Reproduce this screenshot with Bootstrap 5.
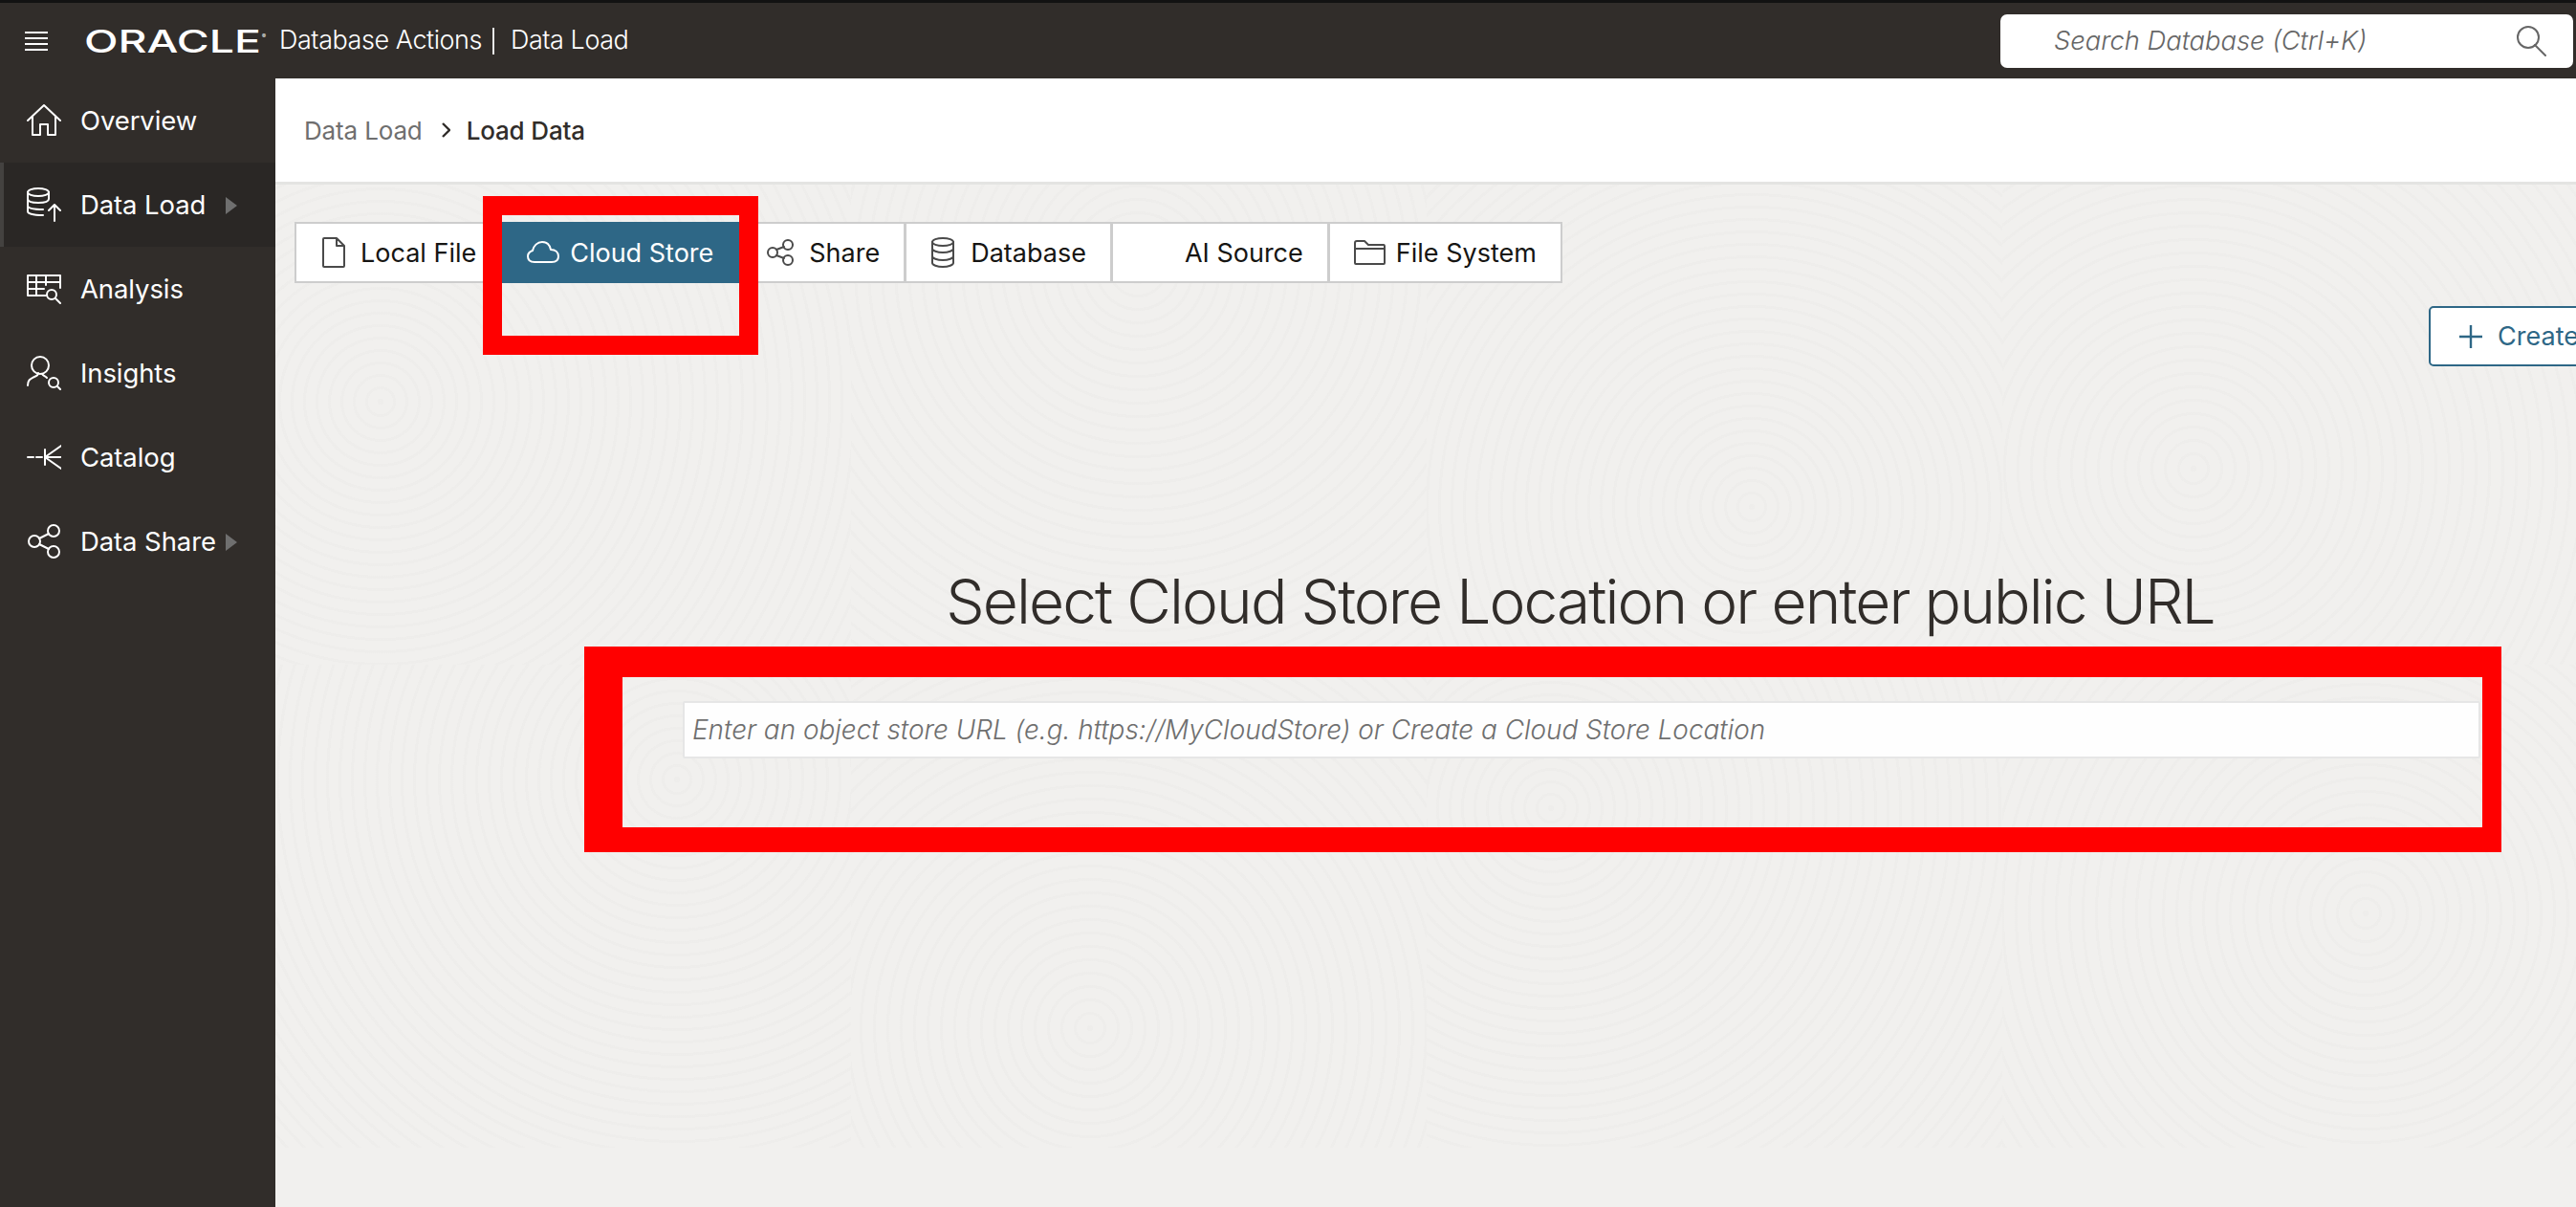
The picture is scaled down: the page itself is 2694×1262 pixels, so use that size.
<!DOCTYPE html>
<html lang="en">
<head>
    <meta charset="UTF-8">
    <meta name="viewport" content="width=device-width, initial-scale=1.0">
    <link href="https://cdn.jsdelivr.net/npm/bootstrap@5.3.0/dist/css/bootstrap.min.css" rel="stylesheet">
    <title>Data Load</title>
    <style>
        html, body { height: 100%; }
        body {
            font-family: Inter, "Liberation Sans", sans-serif;
            background: #312d2a;
            overflow: hidden;
        }
        svg { display: block; flex: none; }
        .ico-line { fill: none; stroke: currentColor; stroke-width: 2; stroke-linecap: round; stroke-linejoin: round; }
        .lbl { padding-top: 2px; }

        /* header */
        .top-bar {
            height: 82px;
            padding: 0 3px 0 26px;
            background: #312d2a;
            border-top: 3px solid #121212;
            color: #fff;
            flex-wrap: nowrap;
        }
        .burger { width: 24px; margin-right: 40px; }
        .oracle-logo { margin-left: -3px; margin-right: 11px; }
        .oracle-logo text { font-family: Inter, sans-serif; font-weight: 500; fill: #fff; }
        .app-title { font-size: 27px; font-weight: 300; letter-spacing: -.45px; white-space: nowrap; }
        .title-sep { width: 2px; height: 28px; background: #e8e8e8; margin: 0 17px 0 11px; }
        .search-box { width: 599px; }
        .search-box .form-control {
            height: 56px;
            padding: 0 60px 0 56px;
            border: 0;
            border-radius: 7px;
            font-size: 27.3px;
        }
        .search-box .form-control::placeholder { color: #666; font-style: italic; font-weight: 300; opacity: 1; }
        .search-ico { position: absolute; top: 12px; right: 28px; color: #666; }

        /* side menu */
        .page-body { height: calc(100% - 82px); }
        .side-menu { width: 288px; background: #312d2a; }
        .side-link {
            height: 88px;
            gap: 20px;
            padding: 0 0 0 28px;
            color: #fff;
            font-size: 27.5px;
            letter-spacing: -.1px;
            white-space: nowrap;
        }
        .side-link:hover, .side-link:focus { color: #fff; }
        .side-link.current { background: #2a2725; box-shadow: inset 4px 0 0 #444240; }
        .side-ico { width: 36px; height: 36px; }
        .side-arrow { position: absolute; left: 236px; top: 36px; width: 12px; height: 18px; fill: #6f6f6f; }

        /* main */
        .main-area {
            background-color: #f1f0ee;
            background-image:
                repeating-radial-gradient(circle at 110px 230px, rgba(0,0,0,.012) 0 3px, transparent 3px 13px),
                repeating-radial-gradient(circle at 300px 90px, rgba(0,0,0,.012) 0 3px, transparent 3px 14px),
                repeating-radial-gradient(circle at 340px 340px, rgba(0,0,0,.012) 0 3px, transparent 3px 13px),
                repeating-radial-gradient(circle at 200px 300px, rgba(0,0,0,.012) 0 3px, transparent 3px 14px),
                repeating-radial-gradient(circle at 420px 120px, rgba(0,0,0,.012) 0 3px, transparent 3px 13px),
                repeating-radial-gradient(circle at 250px 380px, rgba(0,0,0,.012) 0 3px, transparent 3px 14px),
                repeating-radial-gradient(circle at 130px 150px, rgba(0,0,0,.012) 0 3px, transparent 3px 13px),
                repeating-radial-gradient(circle at 380px 260px, rgba(0,0,0,.012) 0 3px, transparent 3px 14px);
            background-size: 602px 505px;
            background-repeat: no-repeat;
            background-position: 0 108px, 602px 108px, 1204px 108px, 1806px 108px, 0 613px, 602px 613px, 1204px 613px, 1806px 613px;
        }
        .crumb-bar {
            height: 111px;
            padding: 0 0 0 30px;
            background: #fff;
            border-bottom: 3px solid #e4e4e2;
            font-size: 26px;
        }
        .crumb-bar .breadcrumb { --bs-breadcrumb-margin-bottom: 0; --bs-breadcrumb-item-padding-x: 0; }
        .crumb-bar .breadcrumb-item + .breadcrumb-item::before { content: none; }
        .crumb-bar li { color: #6f6f6f; letter-spacing: -.15px; }
        .crumb-bar li.active { color: #312d2a; font-weight: 500; }
        .crumb-chev { margin: 0 17px 0 20px; color: #312d2a; }

        .source-tabs { margin: 39px 0 0 22px; }
        .source-tab {
            height: 64px;
            gap: 16px;
            padding: 0 25px;
            margin-left: -2px;
            background: #fff;
            border: 2px solid #cdcdcd;
            border-radius: 0;
            color: #161513;
            font-size: 27px;
            white-space: nowrap;
        }
        .source-tab:hover { background: #fff; border-color: #cdcdcd; color: #161513; }
        .source-tab.current, .source-tab.current:hover { background: #2e6786; border-color: #2e6786; color: #fff; padding-right: 28px; }
        .source-tab.tight { gap: 11px; }
        .tab-spacer { width: 34px; }
        .tab-ico { color: #4a4a4a; }
        .source-tab.current .tab-ico { color: #fff; }

        .create-row { margin: 24px -31px 0 0; }
        .create-btn {
            height: 63px;
            gap: 16px;
            padding: 0 26px 0 30px;
            background: #fff;
            border: 2px solid #2e6786;
            border-radius: 5px;
            color: #2e6786;
            font-size: 27px;
            white-space: nowrap;
        }
        .create-btn:hover { background: #fff; color: #2e6786; border-color: #2e6786; }

        .cloud-form { width: 1880px; margin: 208px 0 0 426px; }
        .cloud-form h1 {
            margin: 0 0 66px;
            padding-right: 3px;
            font-size: 64px;
            line-height: 76px;
            font-weight: 300;
            letter-spacing: -1.9px;
            color: #312d2a;
            text-align: center;
            white-space: nowrap;
        }
        .cloud-form .form-control {
            height: 60px;
            padding: 0 8px;
            background: #fefefe;
            border: 2px solid #e6e6e6;
            border-radius: 2px;
            font-size: 27.9px;
        }
        .cloud-form .form-control::placeholder { color: #6f6f6f; font-style: italic; font-weight: 300; opacity: 1; }

        /* red annotation boxes drawn on the screenshot */
        .red-note { position: absolute; border-style: solid; border-color: #f00; pointer-events: none; }
        .red-tab { left: 217px; top: 123px; width: 288px; height: 166px; border-width: 20px; }
        .red-input { left: 323px; top: 594px; width: 2005px; height: 215px; border-width: 32px 20px 26px 40px; }
    </style>
</head>
<body>

<nav class="navbar top-bar">
    <div class="d-flex align-items-center">
        <svg class="burger" width="24" height="22" viewBox="0 0 24 22"><path d="M0 2H24M0 8H24M0 14H24M0 20H24" stroke="#fff" stroke-width="2"/></svg>
        <svg class="oracle-logo" width="194" height="40" viewBox="0 0 194 40"><text x="1" y="32" font-size="33" textLength="185" lengthAdjust="spacingAndGlyphs">ORACLE</text><text x="187" y="17" font-size="6">®</text></svg>
        <span class="app-title">Database Actions</span>
        <span class="title-sep"></span>
        <span class="app-title">Data Load</span>
    </div>
    <div class="search-box position-relative">
        <input class="form-control" type="text" placeholder="Search Database (Ctrl+K)">
        <svg class="search-ico ico-line" width="32" height="32" viewBox="0 0 32 32"><circle cx="13" cy="12" r="11"/><path d="M20 20L31 31"/></svg>
    </div>
</nav>

<div class="d-flex page-body">
    <nav class="nav flex-column flex-nowrap side-menu flex-shrink-0">
        <a class="nav-link d-flex align-items-center side-link" href="#">
            <svg class="side-ico ico-line" viewBox="0 0 36 36"><path d="M1 18L18 2L35 18M6 14V33H14V22H22V33H30V14"/></svg>
            <span class="lbl">Overview</span>
        </a>
        <a class="nav-link d-flex align-items-center side-link current position-relative" href="#">
            <svg class="side-ico ico-line" viewBox="0 0 36 36"><ellipse cx="12" cy="5" rx="11" ry="4"/><path d="M1 5V25C1 27 5 29 17 29M1 12C1 15 6 16 12 16S23 15 23 12V5M1 19C1 22 6 23 17 23M29 35V18M23 24L29 18L35 24"/></svg>
            <span class="lbl">Data Load</span>
            <svg class="side-arrow" viewBox="0 0 12 18"><path d="M0 0L12 9L0 18Z"/></svg>
        </a>
        <a class="nav-link d-flex align-items-center side-link" href="#">
            <svg class="side-ico ico-line" viewBox="0 0 36 36"><path d="M20 25H1V4H35V17M1 11H35M1 18H18M10 4V25M20 4V14"/><circle cx="26" cy="24" r="5"/><path d="M30 28L35 33"/></svg>
            <span class="lbl">Analysis</span>
        </a>
        <a class="nav-link d-flex align-items-center side-link" href="#">
            <svg class="side-ico ico-line" viewBox="0 0 36 36"><circle cx="14" cy="10" r="9"/><path d="M1 31C1 25 4 24 8 22C11 21 12 20 12 18M16 19C17 21 19 21 21 23"/><circle cx="28" cy="28" r="5"/><path d="M32 32L36 36"/></svg>
            <span class="lbl">Insights</span>
        </a>
        <a class="nav-link d-flex align-items-center side-link" href="#">
            <svg class="side-ico ico-line" viewBox="0 0 36 36"><path d="M1 18H7M10 18H16M19 10V26M36 6L19 18L36 30M19 18H36"/></svg>
            <span class="lbl">Catalog</span>
        </a>
        <a class="nav-link d-flex align-items-center side-link position-relative" href="#">
            <svg class="side-ico ico-line" viewBox="0 0 36 36"><circle cx="8" cy="18" r="6"/><circle cx="28" cy="7" r="6"/><circle cx="28" cy="29" r="6"/><path d="M13 15L23 10M13 21L23 26"/></svg>
            <span class="lbl">Data Share</span>
            <svg class="side-arrow" viewBox="0 0 12 18"><path d="M0 0L12 9L0 18Z"/></svg>
        </a>
    </nav>

    <main class="main-area flex-grow-1 position-relative overflow-hidden">
        <div class="crumb-bar d-flex align-items-center">
            <ol class="breadcrumb">
                <li class="breadcrumb-item">Data Load</li>
                <li class="breadcrumb-item d-flex align-items-center active">
                    <svg class="crumb-chev" width="9" height="16" viewBox="0 0 9 16"><path d="M1 1L8 8L1 15" fill="none" stroke="currentColor" stroke-width="2.4"/></svg>
                    Load Data
                </li>
            </ol>
        </div>

        <div class="btn-group source-tabs">
            <a class="btn d-flex align-items-center source-tab" href="#">
                <svg class="tab-ico ico-line" width="26" height="32" viewBox="0 0 26 32"><path d="M4 1H17L25 9V30C25 31 24 31 24 31H4C3 31 3 31 3 30V2C3 1 4 1 4 1ZM17 1V9H25"/></svg>
                <span class="lbl">Local File</span>
            </a>
            <a class="btn d-flex align-items-center source-tab tight current" href="#">
                <svg class="tab-ico ico-line" width="34" height="24" viewBox="0 0 34 24"><path d="M8 22C4 22 1 20 1 16C1 13 3 11 6 10C7 5 11 1 16 1C21 1 24 4 25 9C30 9 33 12 33 16C33 20 30 22 26 22Z"/></svg>
                <span class="lbl">Cloud Store</span>
            </a>
            <a class="btn d-flex align-items-center source-tab" href="#">
                <svg class="tab-ico ico-line" width="28" height="28" viewBox="0 0 28 28"><circle cx="6" cy="14" r="5"/><circle cx="22" cy="6" r="5"/><circle cx="22" cy="22" r="5"/><path d="M10 11L18 8M10 17L18 20"/></svg>
                <span class="lbl">Share</span>
            </a>
            <a class="btn d-flex align-items-center source-tab" href="#">
                <svg class="tab-ico ico-line" width="26" height="32" viewBox="0 0 26 32"><ellipse cx="13" cy="5" rx="11" ry="4"/><path d="M2 5V27C2 29 7 31 13 31S24 29 24 27V5M2 12C2 14 7 16 13 16S24 14 24 12M2 20C2 22 7 24 13 24S24 22 24 20"/></svg>
                <span class="lbl">Database</span>
            </a>
            <a class="btn d-flex align-items-center source-tab" href="#">
                <span class="tab-spacer"></span>
                <span class="lbl">AI Source</span>
            </a>
            <a class="btn d-flex align-items-center source-tab tight" href="#">
                <svg class="tab-ico ico-line" width="33" height="26" viewBox="0 0 33 26"><path d="M1 24V3C1 2 2 1 3 1H11L15 5H31C32 5 32 6 32 7V24C32 25 31 25 31 25H2C1 25 1 25 1 24ZM1 9H32"/></svg>
                <span class="lbl">File System</span>
            </a>
        </div>

        <div class="d-flex justify-content-end create-row">
            <a class="btn d-flex align-items-center create-btn" href="#">
                <svg width="24" height="24" viewBox="0 0 24 24"><path d="M12 0V24M0 12H24" stroke="currentColor" stroke-width="2.4"/></svg>
                <span class="lbl">Create</span>
            </a>
        </div>

        <div class="cloud-form">
            <h1>Select Cloud Store Location or enter public URL</h1>
            <input class="form-control" type="text" placeholder="Enter an object store URL (e.g. https://MyCloudStore) or Create a Cloud Store Location">
        </div>

        <div class="red-note red-tab"></div>
        <div class="red-note red-input"></div>
    </main>
</div>

<script src="https://cdn.jsdelivr.net/npm/bootstrap@5.3.0/dist/js/bootstrap.bundle.min.js"></script>
</body>
</html>
